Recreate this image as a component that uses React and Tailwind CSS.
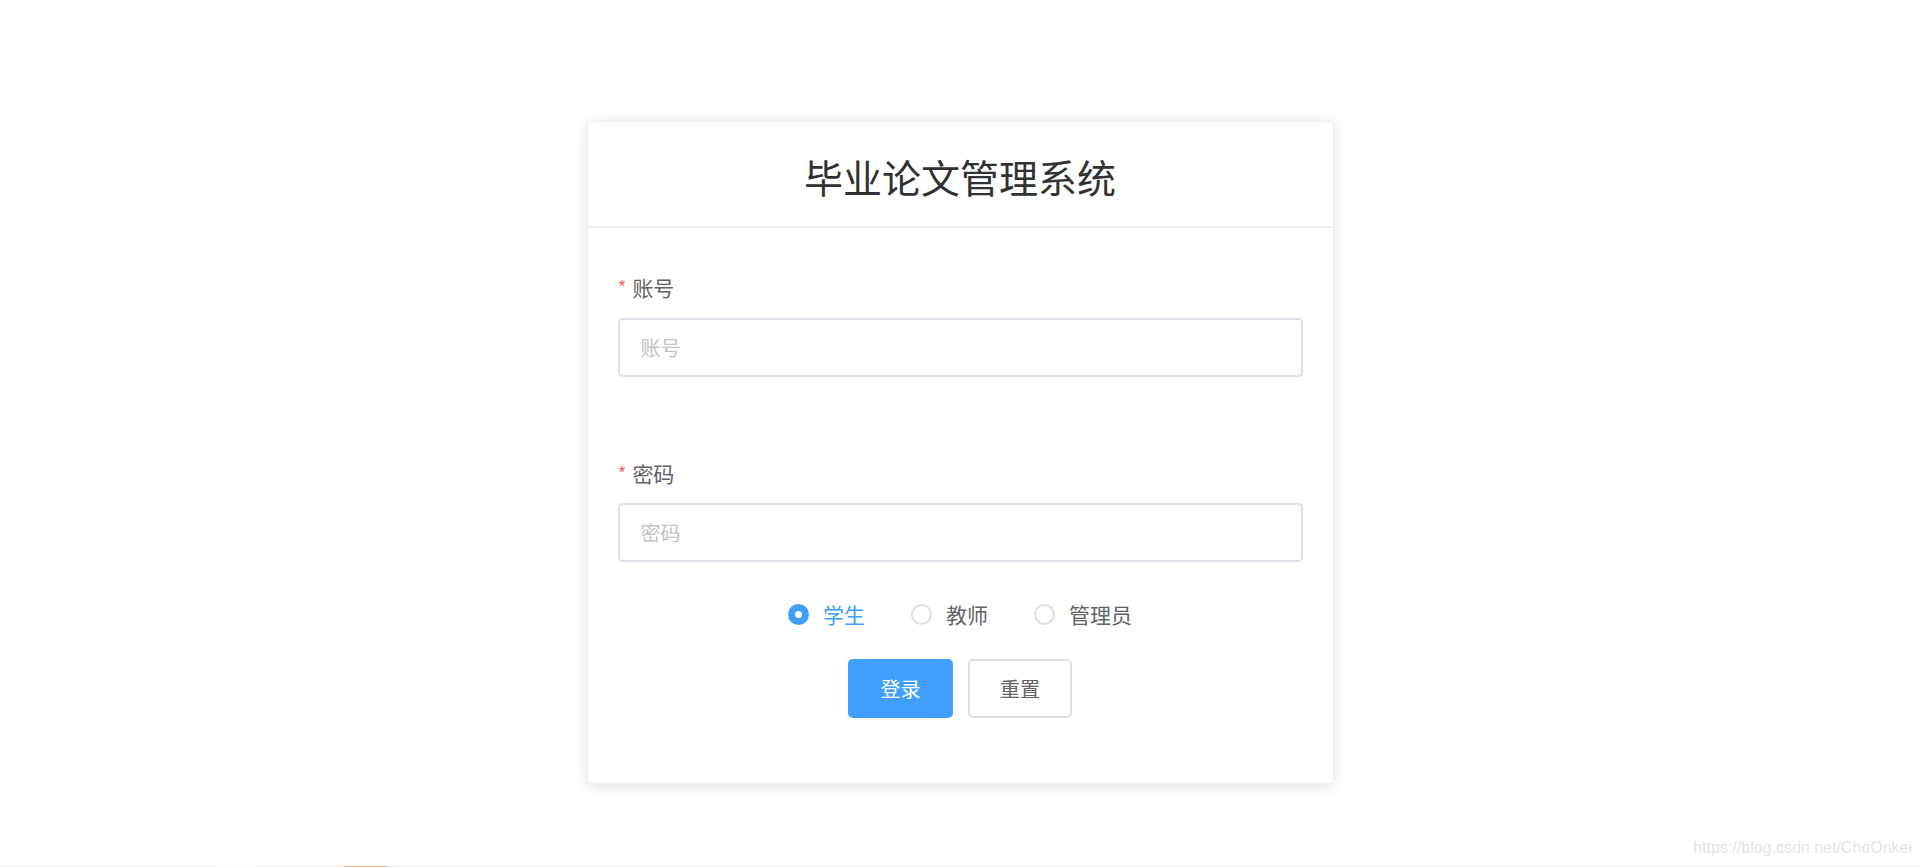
import React, { useState } from "react";

const roles = ["学生", "教师", "管理员"];

const Login = () => {
  const [account, setAccount] = useState("");
  const [password, setPassword] = useState("");
  const [role, setRole] = useState("学生");

  const handleReset = () => {
    setAccount("");
    setPassword("");
    setRole("学生");
  };

  return (
    <div className="w-[747px] mx-auto mt-[121px] bg-white border border-[#ebeef5] rounded-[4px] shadow-[0_2px_14px_0_rgba(0,0,0,0.12)]">
      <div className="h-[106px] flex items-center justify-center border-b-2 border-[#ebeef5] pt-[4px]">
        <h1 className="text-[39px] leading-[48px] text-[#303133] font-normal">毕业论文管理系统</h1>
      </div>
      <div className="px-[30px] pt-[39px] pb-[65px]">
        <label className="flex items-center h-10 leading-10 text-[21px] text-[#606266] mb-[11px]">
          <span className="text-[#f56c6c] text-[19px] mr-[6px]">*</span>
          账号
        </label>
        <input
          value={account}
          onChange={(e) => setAccount(e.target.value)}
          placeholder="账号"
          className="block w-full h-[59px] px-[21px] border-2 border-[#dcdfe6] rounded-[5px] text-[20px] text-[#606266] placeholder:text-[#c0c4cc] outline-none"
        />

        <label className="flex items-center h-10 leading-10 text-[21px] text-[#606266] mt-[76px] mb-[10px]">
          <span className="text-[#f56c6c] text-[19px] mr-[6px]">*</span>
          密码
        </label>
        <input
          type="text"
          value={password}
          onChange={(e) => setPassword(e.target.value)}
          placeholder="密码"
          className="block w-full h-[59px] px-[21px] border-2 border-[#dcdfe6] rounded-[5px] text-[20px] text-[#606266] placeholder:text-[#c0c4cc] outline-none"
        />

        <div className="flex justify-center items-center gap-[46px] h-[30px] mt-[37px]">
          {roles.map((r) => (
            <div key={r} className="flex items-center gap-[14px] cursor-pointer" onClick={() => setRole(r)}>
              {role === r ? (
                <span className="w-[21px] h-[21px] rounded-full bg-[#409eff] flex items-center justify-center">
                  <span className="w-[7px] h-[7px] rounded-full bg-white" />
                </span>
              ) : (
                <span className="w-[21px] h-[21px] rounded-full border-2 border-[#dcdfe6] bg-white" />
              )}
              <span className={`text-[21px] leading-[30px] ${role === r ? "text-[#409eff]" : "text-[#606266]"}`}>{r}</span>
            </div>
          ))}
        </div>

        <div className="flex justify-center gap-[15px] mt-[30px]">
          <button className="w-[105px] h-[59px] rounded-[5px] bg-[#409eff] text-white text-[20px]">登录</button>
          <button
            onClick={handleReset}
            className="w-[104px] h-[59px] rounded-[5px] bg-white border-2 border-[#dcdfe6] text-[#606266] text-[20px]"
          >
            重置
          </button>
        </div>
      </div>
    </div>
  );
};

export default function App() {
  return (
    <div
      className="relative h-[867px] overflow-hidden bg-white"
      style={{ fontFamily: '"Noto Sans CJK SC", "Liberation Sans", sans-serif' }}
    >
      <Login />
      <div className="absolute right-[8px] bottom-[10px] text-[16px] leading-[18px] text-[#e4e4e4] font-['Liberation_Sans',sans-serif]">
        https://blog.csdn.net/ChoOnkei
      </div>
      <div className="absolute left-0 right-0 bottom-0 h-px bg-[#ebebeb]">
        <div className="absolute left-[213px] w-[43px] h-px bg-[#f7f7f7]" />
        <div className="absolute left-[344px] w-[43px] h-px bg-[#f6b27c]" />
      </div>
    </div>
  );
}
